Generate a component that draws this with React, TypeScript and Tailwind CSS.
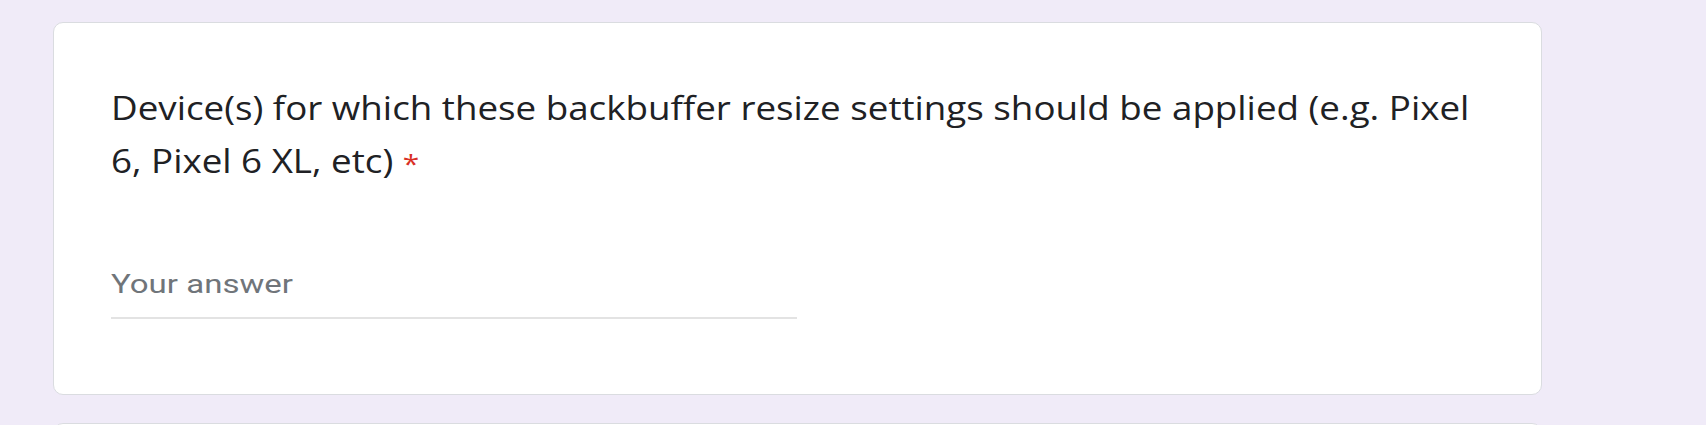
import React from 'react';

const QuestionCard = () => (
    <div className="h-[373px] w-[1489px] rounded-[10px] border border-[#dadce0] bg-white pl-[57px] pt-[58px]">
        <div
            className="origin-left scale-x-[1.148] whitespace-nowrap text-[32px] leading-[53px] text-[#202124]"
            style={{ fontFamily: '"Open Sans", sans-serif' }}
        >
            Device(s) for which these backbuffer resize settings should be applied (e.g. Pixel
            <br />
            6, Pixel 6 XL, etc) <span className="text-[26px] leading-none text-[#d93025]">*</span>
        </div>

        <div className="mt-[81px] w-[686px] border-b-2 border-[#e3e3e3] pb-[17px]">
            <div
                className="origin-left scale-x-[1.27] text-[26px] leading-[32px] text-[#70757a]"
                style={{ fontFamily: 'Roboto, sans-serif' }}
            >
                Your answer
            </div>
        </div>
    </div>
);

export default function App() {
    return (
        <div className="h-[425px] w-full overflow-hidden bg-[#f0ebf8] pl-[53px] pt-[22px]">
            <div className="flex flex-col gap-[28px]">
                <QuestionCard />
                <div className="h-[120px] w-[1489px] rounded-[10px] border border-[#dadce0] bg-white" />
            </div>
        </div>
    );
}
